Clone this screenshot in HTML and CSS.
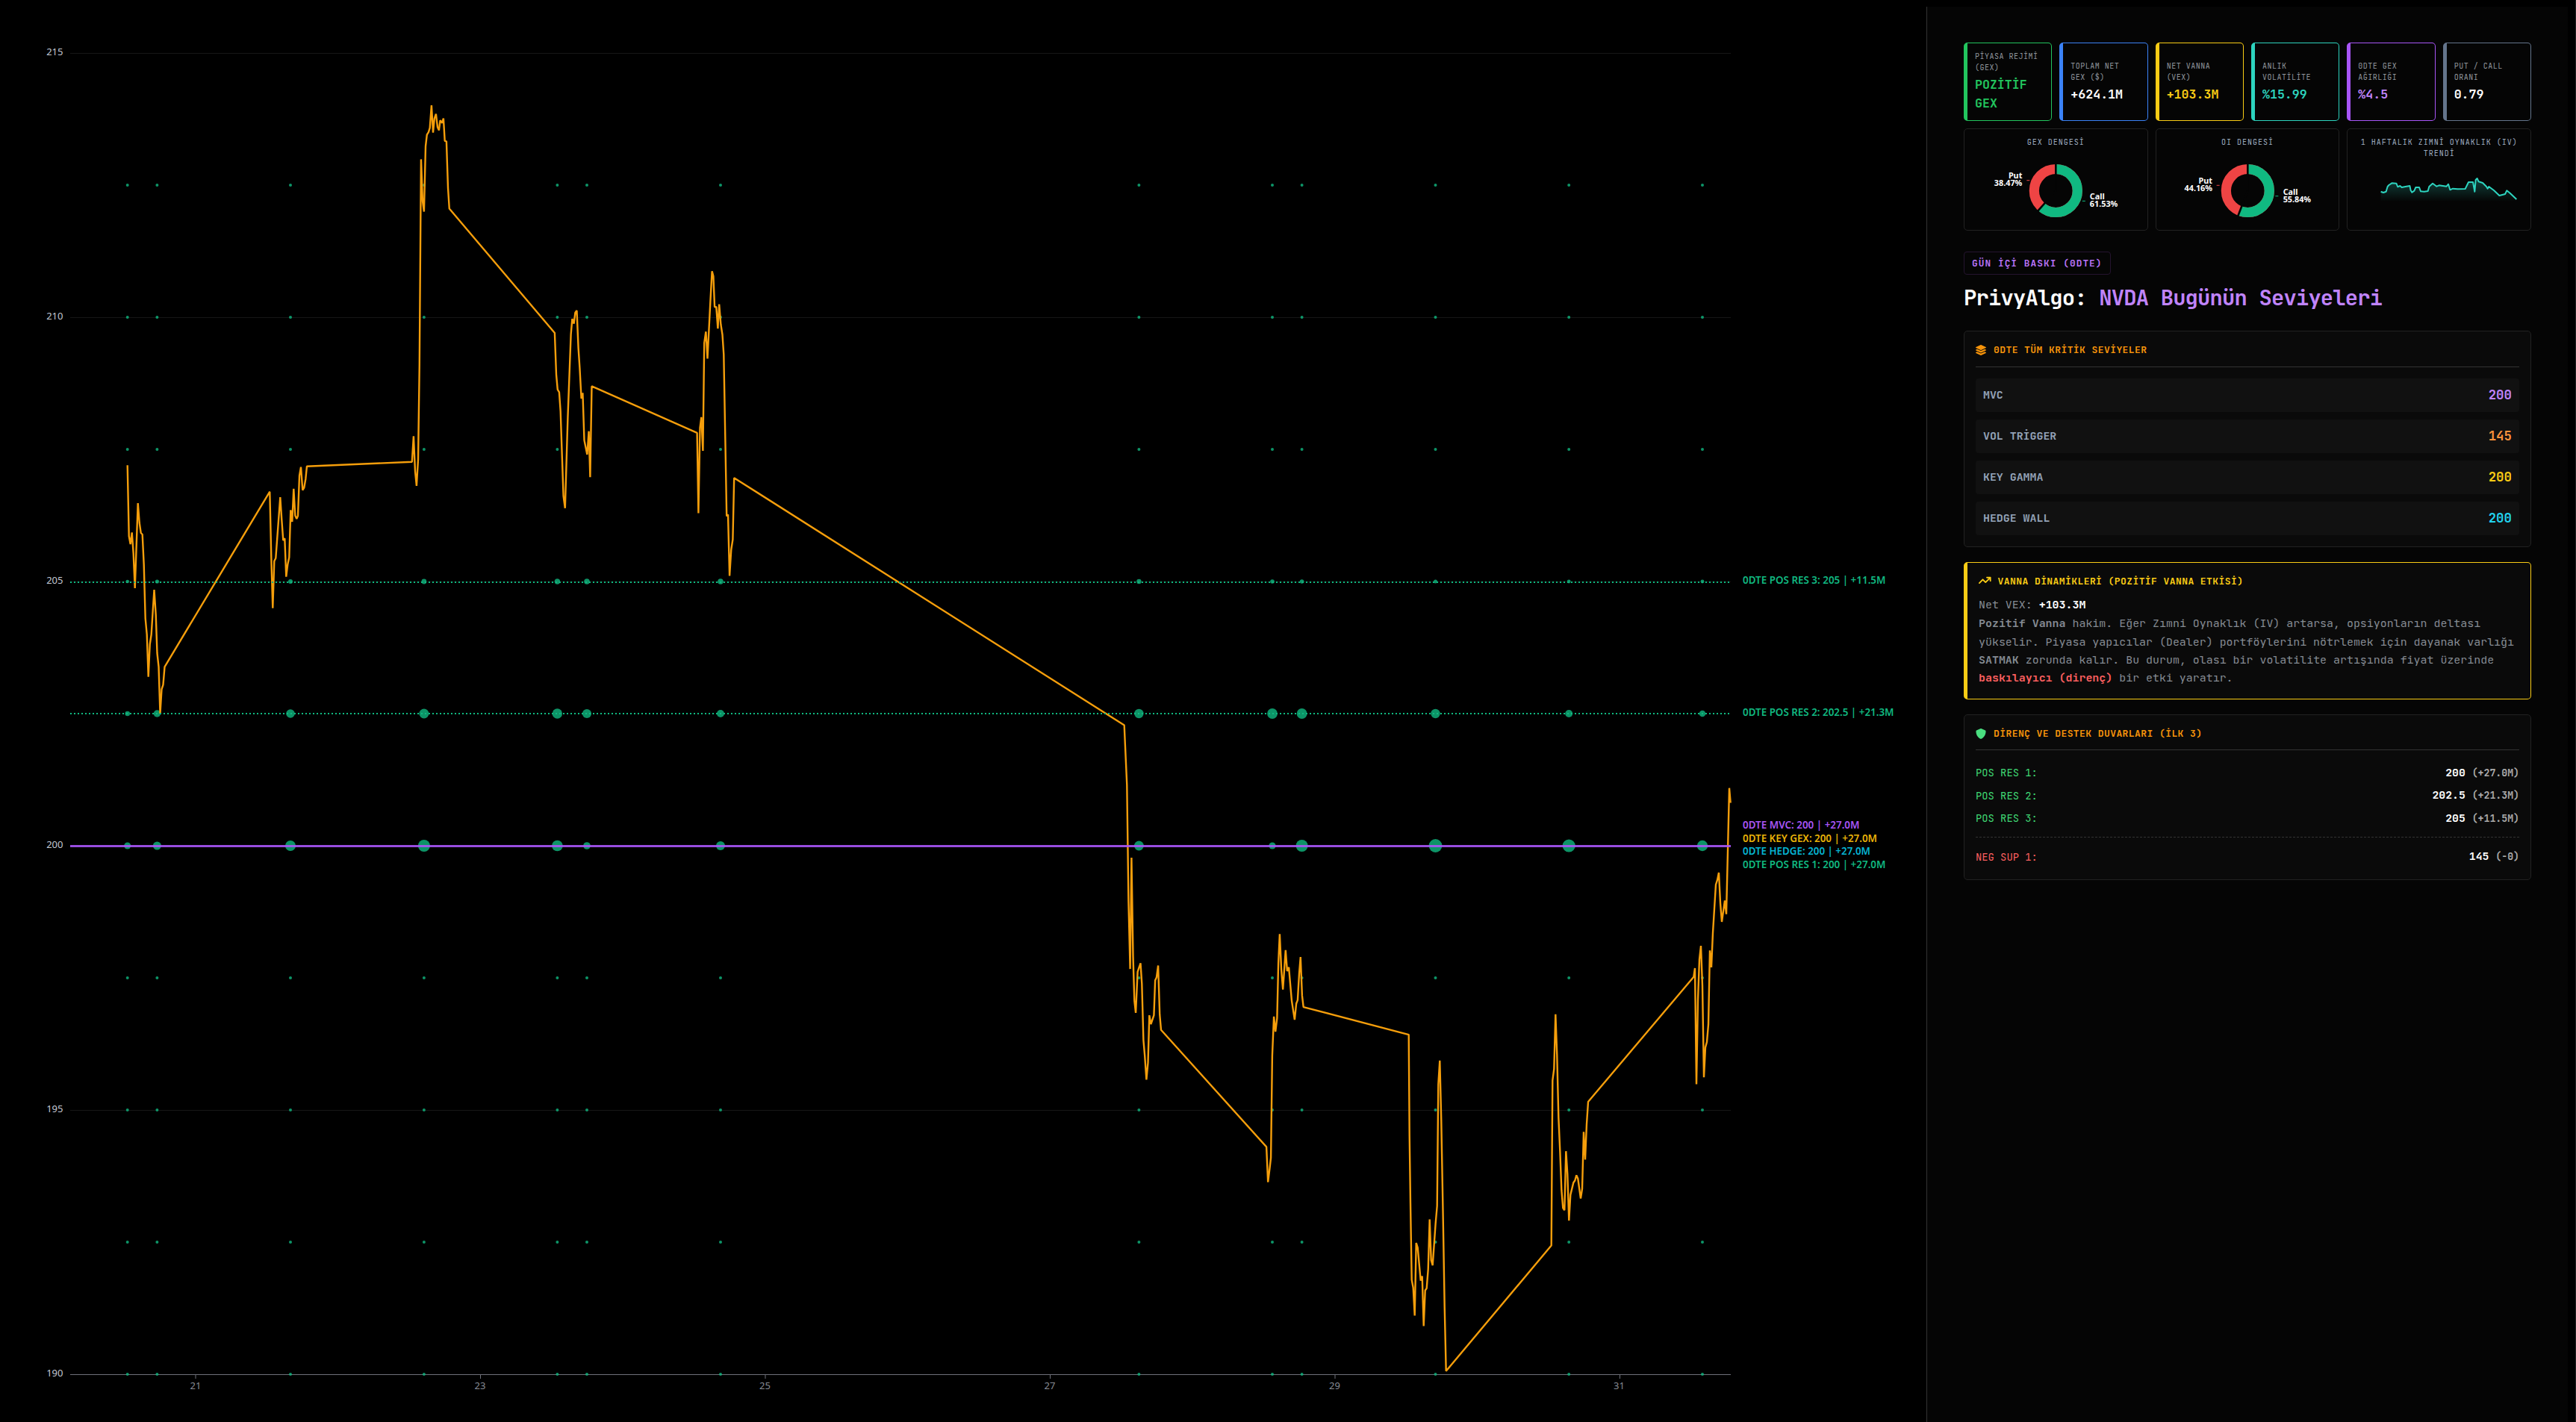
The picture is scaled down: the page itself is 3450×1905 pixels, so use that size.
FILE: index.html
```html
<!DOCTYPE html>
<html lang="tr">
<head>
  <meta charset="UTF-8">
  <title>PrivyAlgo - NVDA GEX Dashboard</title>
  <link rel="stylesheet" href="styles.css">
</head>

<body>

  <!-- === Price chart with GEX bubbles === -->
  <main class="chart-area">
    <svg class="chart" viewBox="0 0 2580 1905" width="2580" height="1905">
      <g class="grid">
        <path d="M94 71.5H2318M94 425.5H2318M94 779.5H2318M94 1133.5H2318M94 1487.5H2318"/>
      </g>
      <g class="axis">
        <path d="M94 1841.5H2318M262 1842v5M643.5 1842v5M1025 1842v5M1406.5 1842v5M1788 1842v5M2169.5 1842v5"/>
      </g>

      <g class="y-labels">
        <text x="84.5" y="74">215</text>
        <text x="84.5" y="428">210</text>
        <text x="84.5" y="782">205</text>
        <text x="84.5" y="1136">200</text>
        <text x="84.5" y="1490">195</text>
        <text x="84.5" y="1844">190</text>
      </g>
      <g class="x-labels">
        <text x="262" y="1861">21</text>
        <text x="643" y="1861">23</text>
        <text x="1024.5" y="1861">25</text>
        <text x="1406" y="1861">27</text>
        <text x="1787.5" y="1861">29</text>
        <text x="2168.5" y="1861">31</text>
      </g>

      <!-- Filled in by script.js -->
      <g class="bubbles" id="bubbles"></g>

      <polyline class="price" points="
        170.7,623.3 172.7,718.3 174.7,729 176.7,713.3 178.7,741.7 180.7,788 184.7,674 186.7,700 188.7,714 190.7,716
        192.7,756.7 194.7,828.3 196.7,850 198.7,906.7 200.7,863.3 202.7,850 206.5,790 208.7,823.3 210.5,875 212.5,893.3
        214.5,956 216.5,923.3 218.5,917.3 220.5,893.3 361.3,658.7 363.3,746.7 365.3,814.7 367.3,751.7 369.3,747.7
        375.3,666 377.3,696.7 379.3,724 381.3,721.3 383.3,772.7 385.3,756 387.3,746.7 389.3,683.3 391.3,699 393.3,654.7
        395.3,690.7 397.3,695 399,691 401,637.3 403,625.7 405.3,656.7 407.3,653.3 409.3,641.7 411,624.7
        551.8,618.8 553.9,584.4 556,631.3 557.9,650.9 560,615.6 561.8,488.4 563.9,213.4 566,269.6 567.9,283.5 570,196
        571.8,180.4 573.9,177.2 575.7,171.4 577.9,141.1 580,177.7 581.8,158.9 583.9,152.7 586,170.5 587.9,174.6
        589.6,161.2 592.1,164.7 593.9,158.5 595.7,188.8 597.9,189.3 600,251.8 601.8,279.5
        742.9,446 745,501.8 746.8,521.9 748.9,525.4 750.7,550.9 752.9,615.6 754.6,664.7 756.8,680.8 760.4,559.8
        764.6,448.2 766.4,427.2 768.6,433.5 770.4,418.8 772.5,416.1 774.6,466.1 776.4,492.9 778.6,533.9 780.4,526.3
        782.5,589.7 786.4,608.9 788.6,577.7 790.4,639.3 792.5,517.4
        933.6,579.9 935.4,687.5 937.5,573.2 939.3,558.9 941.4,604 943.2,459.4 945.4,444.2 947.5,480.4 951.4,403.6
        953.6,363.4 955.4,370.1 957.1,411.2 959.3,411.2 961.4,440.2 963.2,407.6 965.4,434.8 967.5,448.2 969.3,475
        971.4,591.1 973.2,691.5 975,689.3 977.1,771.4 979.3,736.2 981.4,722.8 983.2,640.2
        1505.7,971.6 1509.3,1051.5 1511.4,1207.6 1513.6,1298.1 1515.4,1148.9 1517.5,1281.1 1519.3,1340.8 1521.1,1356.9
        1523.6,1301.8 1527.5,1290.3 1529.3,1317.9 1531.4,1393.6 1533.2,1414.3 1535.4,1446.4 1537.5,1423.5 1539.3,1360.1
        1541.4,1372 1545.4,1360.1 1547.1,1313.3 1548.9,1309.6 1551.1,1293.5 1553.2,1359.2 1555,1379.8
        1696.1,1536.4 1698.2,1583.7 1700.4,1565.8 1702.1,1551.1 1703.9,1414.3 1706.1,1361.9 1708.2,1382.1 1710.4,1363.8
        1712.1,1290.3 1713.9,1251.3 1716.1,1299.5 1718.2,1325.7 1721.8,1272.9 1723.9,1300.9 1726.1,1295.8 1730,1340.8
        1733.9,1366.1 1736.1,1344.5 1737.9,1339.9 1740,1304.1 1741.8,1282 1743.9,1333.9 1745.7,1349.1
        1886.7,1386.1 1887.7,1519.9 1889,1612 1890.7,1714.6 1892.7,1725.2 1894.7,1762.4 1896.7,1665 1898.7,1671.4
        1902.7,1715.7 1904.7,1709.6 1906.7,1776.5 1908.7,1728.8 1910.7,1725.9 1912.7,1700.4 1914.7,1633.5 1916.7,1688.1
        1918.7,1695.1 1922.7,1638.5 1924.7,1615.5 1926.3,1452.7 1928.3,1420.8 1930.3,1502.2 1932.7,1633.2 1934.7,1750
        1936.7,1836.7 2077.7,1668.6 2079.3,1447.3 2081.3,1432.1 2083.3,1358.8 2085.3,1413.7 2087.3,1496.9 2089.3,1541.2
        2091.3,1594.2 2093.3,1618.3 2095.3,1621.2 2097.3,1542.2 2099.3,1573 2101.3,1635.3 2103.3,1600.6 2107.3,1584.3
        2109.3,1581.5 2111.3,1574.4 2113.3,1579 2117,1605.6 2119,1592.5 2121,1516.4 2123,1553.5 2125,1505.8 2127,1476
        2268.3,1308.7 2270,1296.9 2272,1452.6 2274,1339.3 2276,1285.1 2278,1267.1 2280,1320.5 2282,1443.2 2284,1403.1
        2286,1396 2288,1372.4 2290,1273.3 2292,1295.9 2294,1249.7 2298,1185 2300,1178.9 2302,1169 2304,1209.6
        2306,1235 2310,1206.3 2312,1224.7 2316,1055.7 2317.7,1075.5"/>

      <!-- Level lines -->
      <path class="level-dotted" d="M94 780H2318M94 956H2318"/>
      <path class="level-mvc" d="M94 1133.5H2318"/>

      <g class="level-labels">
        <text class="c-green" x="2334" y="782" textLength="191.5" lengthAdjust="spacingAndGlyphs">0DTE POS RES 3: 205 | +11.5M</text>
        <text class="c-green" x="2334" y="959" textLength="202.5" lengthAdjust="spacingAndGlyphs">0DTE POS RES 2: 202.5 | +21.3M</text>
        <text class="c-purple" x="2334" y="1110" textLength="156.5" lengthAdjust="spacingAndGlyphs">0DTE MVC: 200 | +27.0M</text>
        <text class="c-gold" x="2334" y="1128" textLength="180" lengthAdjust="spacingAndGlyphs">0DTE KEY GEX: 200 | +27.0M</text>
        <text class="c-blue" x="2334" y="1145" textLength="171" lengthAdjust="spacingAndGlyphs">0DTE HEDGE: 200 | +27.0M</text>
        <text class="c-green" x="2334" y="1163" textLength="191.5" lengthAdjust="spacingAndGlyphs">0DTE POS RES 1: 200 | +27.0M</text>
      </g>
    </svg>
  </main>

  <!-- === Sidebar === -->
  <aside class="sidebar">

    <!-- KPI cards -->
    <section class="kpi-grid">
      <div class="kpi kpi-green">
        <div class="kpi-label">PİYASA REJİMİ (GEX)</div>
        <div class="kpi-value">POZİTİF GEX</div>
      </div>
      <div class="kpi kpi-blue">
        <div class="kpi-label">TOPLAM NET<br>GEX ($)</div>
        <div class="kpi-value">+624.1M</div>
      </div>
      <div class="kpi kpi-yellow">
        <div class="kpi-label">NET VANNA (VEX)</div>
        <div class="kpi-value">+103.3M</div>
      </div>
      <div class="kpi kpi-teal">
        <div class="kpi-label">ANLIK VOLATİLİTE</div>
        <div class="kpi-value">%15.99</div>
      </div>
      <div class="kpi kpi-purple">
        <div class="kpi-label">0DTE GEX AĞIRLIĞI</div>
        <div class="kpi-value">%4.5</div>
      </div>
      <div class="kpi kpi-gray">
        <div class="kpi-label">PUT / CALL ORANI</div>
        <div class="kpi-value">0.79</div>
      </div>
    </section>

    <!-- Mini charts -->
    <section class="mini-grid">
      <div class="mini">
        <div class="mini-title">GEX DENGESİ</div>
        <svg class="mini-chart" viewBox="0 0 224 85">
          <circle class="ring ring-put" cx="112" cy="42.5" r="29"/>
          <circle class="ring ring-call" cx="112" cy="42.5" r="29" pathLength="100" stroke-dasharray="61.53 38.47" transform="rotate(-90 112 42.5)"/>
          <path class="ring-gap" d="M112 42.5V4M112 42.5L87.5 70.2"/>
          <path class="tick-put" d="M73 28.7h4"/>
          <path class="tick-call" d="M147.5 56.3h4"/>
          <text class="end" x="67" y="26">Put</text>
          <text class="end" x="67" y="35.8">38.47%</text>
          <text x="157.5" y="54">Call</text>
          <text x="157.5" y="63.8">61.53%</text>
        </svg>
      </div>
      <div class="mini">
        <div class="mini-title">OI DENGESİ</div>
        <svg class="mini-chart" viewBox="0 0 224 85">
          <circle class="ring ring-put" cx="112" cy="42.5" r="29"/>
          <circle class="ring ring-call" cx="112" cy="42.5" r="29" pathLength="100" stroke-dasharray="55.84 44.16" transform="rotate(-90 112 42.5)"/>
          <path class="ring-gap" d="M112 42.5V4M112 42.5L98.7 77"/>
          <path class="tick-put" d="M70.3 35.3h4"/>
          <path class="tick-call" d="M149 49.7h4"/>
          <text class="end" x="64.7" y="33">Put</text>
          <text class="end" x="64.7" y="42.8">44.16%</text>
          <text x="159.3" y="48">Call</text>
          <text x="159.3" y="57.8">55.84%</text>
        </svg>
      </div>
      <div class="mini">
        <div class="mini-title">1 HAFTALIK ZIMNİ OYNAKLIK (IV) TRENDİ</div>
        <svg class="mini-chart" viewBox="0 0 224 85">
          <defs>
            <linearGradient id="ivFill" x1="0" y1="0" x2="0" y2="1">
              <stop offset="0" stop-color="#2dd4bf" stop-opacity="0.3"/>
              <stop offset="1" stop-color="#2dd4bf" stop-opacity="0"/>
            </linearGradient>
          </defs>
          <path fill="url(#ivFill)" d="M34.3 57V43.7L37.7 45 41.3 43.7 43.3 37 45 35 49 32.3 55 32.7 57 37.3 60 36 62.3 38 67.3 37 73 36 74.3 42 76 44.7 79 42.7 81 38 85.7 38 87.7 43.3 92.3 43.7 97.3 43 99 37 103.7 32.7 109 36.7 112.3 35.3 122.3 36.7 124.7 33.7 127 41.3 130.7 39.7 137.3 40.3 147.3 40 151.7 31 157.7 31 160 43.7 161.3 28 163.3 26 165.3 30.3 170.7 32 175.7 37 177.3 39.7 179 37 185.7 42 193 49 200.7 47 203 42.3 207.3 45.7 216 54V57Z"/>
          <path class="iv-line" d="M34.3 43.7L37.7 45 41.3 43.7 43.3 37 45 35 49 32.3 55 32.7 57 37.3 60 36 62.3 38 67.3 37 73 36 74.3 42 76 44.7 79 42.7 81 38 85.7 38 87.7 43.3 92.3 43.7 97.3 43 99 37 103.7 32.7 109 36.7 112.3 35.3 122.3 36.7 124.7 33.7 127 41.3 130.7 39.7 137.3 40.3 147.3 40 151.7 31 157.7 31 160 43.7 161.3 28 163.3 26 165.3 30.3 170.7 32 175.7 37 177.3 39.7 179 37 185.7 42 193 49 200.7 47 203 42.3 207.3 45.7 216 54"/>
        </svg>
      </div>
    </section>

    <div class="badge">GÜN İÇİ BASKI (0DTE)</div>
    <h1>PrivyAlgo: <span>NVDA Bugünün Seviyeleri</span></h1>

    <!-- Critical levels -->
    <section class="card">
      <h3 class="card-title">
        <svg class="icon" viewBox="0 0 512 512"><path d="M12.41 148.02l232.94 105.67c6.8 3.09 14.49 3.09 21.29 0l232.94-105.67c16.55-7.51 16.55-32.52 0-40.03L266.65 2.31a25.607 25.607 0 0 0-21.29 0L12.41 107.98c-16.55 7.51-16.55 32.53 0 40.04zm487.18 88.28l-58.09-26.33-161.64 73.27c-7.56 3.43-15.59 5.17-23.86 5.17s-16.29-1.74-23.86-5.17L70.51 209.97l-58.1 26.33c-16.55 7.5-16.55 32.5 0 40l232.94 105.59c6.8 3.08 14.49 3.08 21.29 0L499.59 276.3c16.55-7.5 16.55-32.5 0-40zm0 127.8l-57.87-26.23-161.86 73.37c-7.56 3.43-15.59 5.17-23.86 5.17s-16.29-1.74-23.86-5.17L70.29 337.87 12.41 364.1c-16.55 7.5-16.55 32.5 0 40l232.94 105.59c6.8 3.08 14.49 3.08 21.29 0L499.59 404.1c16.55-7.5 16.55-32.5 0-40z"/></svg>
        0DTE TÜM KRİTİK SEVİYELER
      </h3>
      <div class="level-list">
        <div class="level-row"><span>MVC</span><b class="t-purple">200</b></div>
        <div class="level-row"><span>VOL TRİGGER</span><b class="t-orange">145</b></div>
        <div class="level-row"><span>KEY GAMMA</span><b class="t-yellow">200</b></div>
        <div class="level-row"><span>HEDGE WALL</span><b class="t-cyan">200</b></div>
      </div>
    </section>

    <!-- Vanna dynamics -->
    <section class="card card-vanna">
      <h3 class="vanna-title">
        <svg class="icon-wide" viewBox="0 0 576 512"><path d="M384 160c-17.7 0-32-14.3-32-32s14.3-32 32-32H544c17.7 0 32 14.3 32 32V288c0 17.7-14.3 32-32 32s-32-14.3-32-32V205.3L342.6 374.6c-12.5 12.5-32.8 12.5-45.3 0L192 269.3 54.6 406.6c-12.5 12.5-32.8 12.5-45.3 0s-12.5-32.8 0-45.3l160-160c12.5-12.5 32.8-12.5 45.3 0L320 306.7 466.7 160H384z"/></svg>
        VANNA DİNAMİKLERİ (POZİTİF VANNA ETKİSİ)
      </h3>
      <div class="vex">Net VEX: <b class="t-white">+103.3M</b></div>
      <p>
        <b>Pozitif Vanna</b> hakim. Eğer Zımni Oynaklık (IV) artarsa, opsiyonların deltası yükselir. Piyasa yapıcılar (Dealer) portföylerini nötrlemek için dayanak varlığı <b>SATMAK</b> zorunda kalır. Bu durum, olası bir volatilite artışında fiyat üzerinde <b class="t-red">baskılayıcı (direnç)</b> bir etki yaratır.
      </p>
    </section>

    <!-- Walls -->
    <section class="card">
      <h3 class="card-title">
        <svg class="icon icon-green" viewBox="0 0 512 512"><path d="M256 0c4.6 0 9.2 1 13.4 2.9L457.7 82.8c22 9.3 38.4 31 38.3 57.2c-.5 99.2-41.3 280.7-213.6 363.2c-16.7 8-36.1 8-52.8 0C57.3 420.7 16.5 239.2 16 140c-.1-26.2 16.3-47.9 38.3-57.2L242.7 2.9C246.8 1 251.4 0 256 0z"/></svg>
        DİRENÇ VE DESTEK DUVARLARI (İLK 3)
      </h3>
      <div class="wall-row t-green"><span>POS RES 1:</span><b>200 <small>(+27.0M)</small></b></div>
      <div class="wall-row t-green"><span>POS RES 2:</span><b>202.5 <small>(+21.3M)</small></b></div>
      <div class="wall-row t-green"><span>POS RES 3:</span><b>205 <small>(+11.5M)</small></b></div>
      <div class="divider"></div>
      <div class="wall-row t-red"><span>NEG SUP 1:</span><b>145 <small>(-0)</small></b></div>
    </section>

  </aside>

  <script src="script.js"></script>
</body>
</html>
```
FILE: styles.css
```css
/* Base styling */
* {
  box-sizing: border-box;
}

body {
  margin: 0;
  height: 1905px;
  display: flex;
  background-color: #000;
  border-right: 1px solid #222;
  font-family: "JetBrains Mono", "DejaVu Sans Mono", monospace;
  line-height: 1.5;
  color: #fff;
  overflow: hidden;
}

/* Main chart */
.chart-area {
  width: 2580px;
  flex: none;
}

.chart {
  display: block;
  font-family: "Noto Sans", sans-serif;
}

.grid path {
  stroke: #161616;
}

.axis path {
  stroke: #6e7079;
  fill: none;
}

.y-labels text {
  font-size: 13px;
  fill: #c4c9d4;
  text-anchor: end;
}

.x-labels text {
  font-size: 13px;
  fill: #868b94;
  text-anchor: middle;
}

.bubbles circle {
  fill: #10b981;
  opacity: 0.8;
}

.price {
  fill: none;
  stroke: #f59e0b;
  stroke-width: 2.4;
  stroke-linejoin: bevel;
}

.level-dotted {
  stroke: #10b981;
  stroke-width: 2;
  stroke-dasharray: 2 3;
}

.level-mvc {
  stroke: #a855f7;
  stroke-width: 3;
  opacity: 0.9;
}

.level-labels text {
  font-size: 13.4px;
  font-weight: 600;
}

.c-green { fill: #10b981; }
.c-purple { fill: #a855f7; }
.c-gold { fill: #eab308; }
.c-blue { fill: #06b6d4; }

/* Sidebar */
.sidebar {
  width: 859px;
  flex: none;
  margin-top: 9px;
  padding: 48px 49px;
  background-color: #050505;
  border-left: 1px solid #333;
}

/* KPI cards */
.kpi-grid {
  display: grid;
  grid-template-columns: repeat(6, 1fr);
  gap: 10px;
  height: 105px;
}

.kpi {
  display: flex;
  flex-direction: column;
  justify-content: center;
  padding: 0 10px;
  border: 1px solid;
  border-left-width: 5px;
  border-radius: 5px;
}

.kpi-label {
  font-size: 10px;
  letter-spacing: 0.5px;
  color: #90959c;
  margin-bottom: 3px;
}

.kpi-value {
  font-size: 16.6px;
  line-height: 25px;
  font-weight: bold;
}

.kpi-green { border-color: #22c55e; color: #22c55e; }
.kpi-blue { border-color: #3b82f6; }
.kpi-yellow { border-color: #facc15; color: #facc15; }
.kpi-teal { border-color: #2dd4bf; color: #2dd4bf; }
.kpi-purple { border-color: #a855f7; color: #c084fc; }
.kpi-gray { border-color: #64748b; }
.kpi-blue .kpi-value,
.kpi-gray .kpi-value { color: #fff; }

/* Mini charts */
.mini-grid {
  display: grid;
  grid-template-columns: repeat(3, 1fr);
  gap: 10px;
  height: 137px;
  margin-top: 10px;
}

.mini {
  display: flex;
  flex-direction: column;
  justify-content: space-between;
  padding: 10px;
  border: 1px solid #222;
  border-radius: 5px;
}

.mini-title {
  font-size: 10px;
  letter-spacing: 1px;
  color: #9dacc0;
  text-align: center;
}

.mini-chart {
  display: block;
  width: 100%;
  height: 85px;
  font-family: "Noto Sans", sans-serif;
  font-size: 10.8px;
  font-weight: bold;
  fill: #fff;
}

.end {
  text-anchor: end;
}

.ring {
  fill: none;
  stroke-width: 13.2;
}

.ring-put, .tick-put { stroke: #ef4444; }
.ring-call, .tick-call { stroke: #10b981; }

.ring-gap {
  stroke: #050505;
  stroke-width: 2.6;
}

.iv-line {
  fill: none;
  stroke: #2dd4bf;
  stroke-width: 2;
  stroke-linejoin: round;
}

/* Title block */
.badge {
  width: fit-content;
  margin-top: 28px;
  padding: 5px 10px;
  border: 1px solid #24142f;
  border-radius: 4px;
  font-size: 12.8px;
  line-height: 19px;
  letter-spacing: 1.05px;
  font-weight: bold;
  color: #b873f8;
}

h1 {
  margin: 14px 0 27px;
  font-size: 28.8px;
  line-height: 34px;
  letter-spacing: -0.8px;
}

h1 span {
  color: #c084fc;
}

/* Cards */
.card {
  padding: 15px;
  margin-bottom: 20px;
  background-color: #0a0a0a;
  border: 1px solid #222;
  border-radius: 5px;
}

.card-title {
  display: flex;
  align-items: center;
  gap: 10px;
  margin: 0 0 15px;
  padding-bottom: 12px;
  border-bottom: 1px solid #333;
  font-size: 13px;
  line-height: 19.5px;
  letter-spacing: 0.42px;
  color: #f7940a;
}

.icon {
  width: 14px;
  height: 14px;
  fill: #f7940a;
}

.icon-green {
  fill: #4ade80;
}

.level-list {
  display: flex;
  flex-direction: column;
  gap: 10.1px;
}

.level-row {
  display: flex;
  justify-content: space-between;
  align-items: center;
  height: 45px;
  padding: 0 10px;
  background-color: #111;
  border-radius: 4px;
}

.level-row span {
  color: #94a3b8;
  font-weight: 600;
  font-size: 14.9px;
}

.level-row b {
  font-size: 17.4px;
}

/* Vanna card */
.card-vanna {
  height: 184px;
  border-color: #facc15;
  border-left-width: 5px;
  font-size: 14.94px;
  line-height: 24.4px;
  color: #858b93;
}

.vanna-title {
  display: flex;
  align-items: center;
  gap: 9px;
  margin: 0 0 9px;
  font-size: 13px;
  line-height: 20px;
  letter-spacing: 0.42px;
  color: #facc15;
}

.icon-wide {
  width: 16.6px;
  height: 14.8px;
  margin-top: -3px;
  fill: #facc15;
}

.vex {
  margin-bottom: 1px;
}

.card-vanna p {
  margin: 0 -10px 0 0;
}

/* Wall rows */
.wall-row {
  display: flex;
  justify-content: space-between;
  align-items: center;
  height: 30.4px;
  font-size: 13.8px;
  line-height: 20px;
}

.wall-row b {
  font-size: 14.8px;
  color: #fff;
}

.wall-row small {
  font-size: 13.2px;
  color: #aaa;
}

.divider {
  margin: 10px 0;
  border-top: 1px dashed #333;
}

.t-white { color: #fff; }
.t-purple { color: #c084fc; }
.t-orange { color: #fb923c; }
.t-yellow { color: #facc15; }
.t-cyan { color: #22d3ee; }
.t-green { color: #3fd873; }
.t-red { color: #fb5f5f; }
```
FILE: script.js
```javascript
// GEX snapshots on the time axis
const columns = [170.7, 210.4, 389, 567.9, 746.4, 786, 965, 1525.4, 1704, 1743.6, 1922.5, 2101.2, 2280];

// Bubble radius per strike, one value for each snapshot
const strikes = {
  212.5: 2,
  210: 2,
  207.5: 2,
  205: [2.3, 2.6, 3, 3.4, 3.7, 3.8, 3.8, 3.2, 2.8, 2.8, 2.5, 2.4, 2.4],
  202.5: [3.3, 4.7, 5.8, 6.5, 6.7, 6.1, 5, 6.2, 6.9, 6.9, 6.2, 5, 4.3],
  200: [4.5, 5.5, 7, 8, 7.3, 4.8, 6, 6.4, 4.6, 8, 8.9, 8.6, 7.2],
  197.5: 2,
  195: 2,
  192.5: 2,
  190: 2
};

const group = document.getElementById("bubbles");

for (const strike in strikes) {
  const radii = strikes[strike];
  columns.forEach((x, i) => {
    const dot = document.createElementNS("http://www.w3.org/2000/svg", "circle");
    dot.setAttribute("cx", x);
    dot.setAttribute("cy", 71 + (215 - strike) * 70.8);
    dot.setAttribute("r", Array.isArray(radii) ? radii[i] : radii);
    group.appendChild(dot);
  });
}
```
